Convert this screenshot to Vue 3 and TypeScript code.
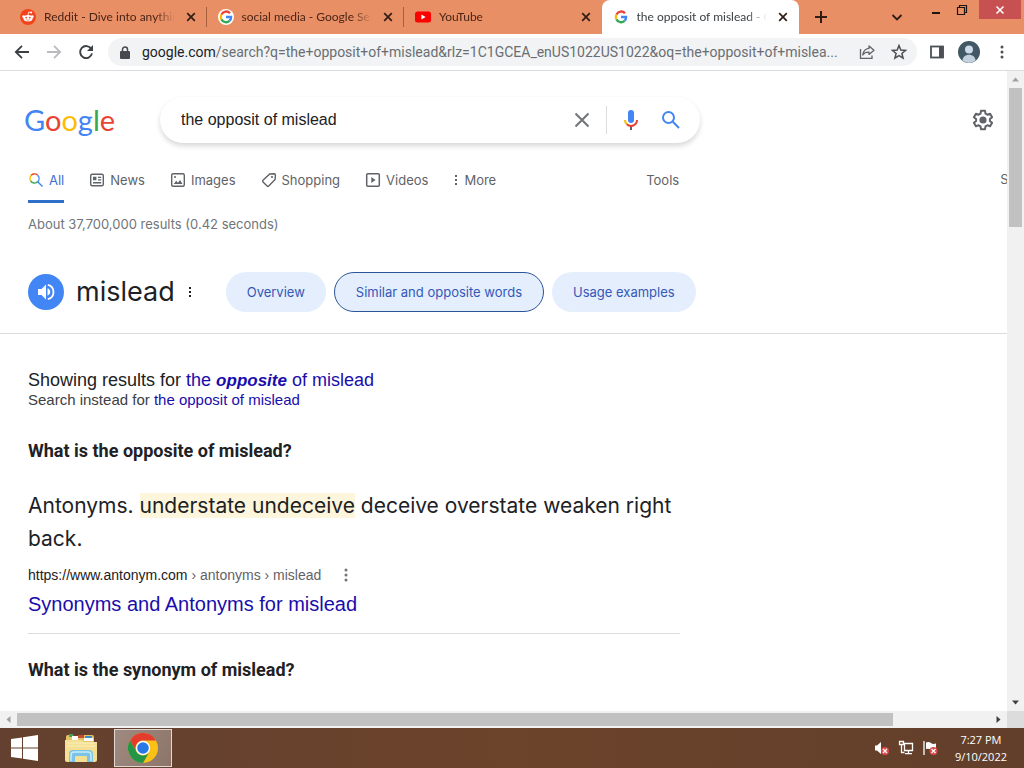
<script setup lang="ts">
import { ref } from 'vue'

interface BrowserTab {
  id: string
  title: string
  active?: boolean
}

interface SearchMode {
  id: string
  label: string
}

const tabs: BrowserTab[] = [
  { id: 'reddit', title: 'Reddit - Dive into anything' },
  { id: 'google-round', title: 'social media - Google Search' },
  { id: 'youtube', title: 'YouTube' },
  { id: 'google', title: 'the opposit of mislead - Google Search', active: true },
]

const modes: SearchMode[] = [
  { id: 'all', label: 'All' },
  { id: 'news', label: 'News' },
  { id: 'images', label: 'Images' },
  { id: 'shopping', label: 'Shopping' },
  { id: 'videos', label: 'Videos' },
  { id: 'more', label: 'More' },
]

const chips = ['Overview', 'Similar and opposite words', 'Usage examples']
const selectedChip = ref('Similar and opposite words')
const query = ref('the opposit of mislead')
const urlHost = 'google.com'
const urlPath =
  '/search?q=the+opposit+of+mislead&rlz=1C1GCEA_enUS1022US1022&oq=the+opposit+of+mislea...'
</script>

<template>
  <div class="window">
    <header class="tabstrip">
      <div class="tabs">
        <div v-for="tab in tabs" :key="tab.id" class="tab" :class="{ active: tab.active }">
          <svg v-if="tab.id === 'reddit'" class="fav" viewBox="0 0 16 16">
            <circle cx="8" cy="8" r="8" fill="#f4431c" />
            <circle cx="3.6" cy="7.6" r="1.3" fill="#fff" />
            <circle cx="12.4" cy="7.6" r="1.3" fill="#fff" />
            <ellipse cx="8" cy="9.2" rx="4.6" ry="3.3" fill="#fff" />
            <path d="M8 6l.8-3 2.2.6" fill="none" stroke="#fff" stroke-width=".8" />
            <circle cx="11.2" cy="3.6" r="1" fill="#fff" />
            <circle cx="6.2" cy="8.6" r=".9" fill="#f4431c" />
            <circle cx="9.8" cy="8.6" r=".9" fill="#f4431c" />
            <path d="M6.2 10.7q1.8 1.1 3.6 0" fill="none" stroke="#f4431c" stroke-width=".6" />
          </svg>
          <svg v-else-if="tab.id === 'youtube'" class="fav" viewBox="0 0 16 16">
            <rect x="0" y="2.5" width="16" height="11" rx="2.5" fill="#f00" />
            <path d="M6.4 5.6v4.8L10.6 8z" fill="#fff" />
          </svg>
          <svg v-else class="fav" viewBox="0 0 16 16">
            <circle v-if="tab.id === 'google-round'" cx="8" cy="8" r="8" fill="#fff" />
            <g fill="none" stroke-width="2.3">
              <path d="M12 4.2A5.2 5.2 0 0 0 3.4 5.6" stroke="#ea4335" />
              <path d="M3.4 5.6a5.2 5.2 0 0 0 0 4.8" stroke="#fbbc05" />
              <path d="M3.4 10.4a5.2 5.2 0 0 0 8.2 1.4" stroke="#34a853" />
              <path d="M11.6 11.8A5 5 0 0 0 13.1 8H8" stroke="#4285f4" />
            </g>
          </svg>
          <span class="tab-title">{{ tab.title }}</span>
          <button class="tab-close" :aria-label="'Close ' + tab.title">
            <svg width="10" height="10" viewBox="0 0 10 10">
              <path d="M1.2 1.2l7.6 7.6M8.8 1.2L1.2 8.8" stroke="currentColor" stroke-width="1.7" />
            </svg>
          </button>
        </div>
      </div>
      <button class="new-tab" aria-label="New tab">
        <svg width="14" height="14" viewBox="0 0 14 14">
          <path d="M7 1v12M1 7h12" stroke="#2f1d16" stroke-width="2" />
        </svg>
      </button>
      <span class="grow"></span>
      <button class="tab-search" aria-label="Search tabs">
        <svg width="12" height="12" viewBox="0 0 12 12">
          <path d="M1.5 4L6 8.5 10.5 4" fill="none" stroke="#2f1d16" stroke-width="1.8" />
        </svg>
      </button>
      <div class="win-buttons">
        <button aria-label="Minimize">
          <svg width="10" height="18" viewBox="0 0 10 18">
            <path d="M1 12h8" stroke="#1e1410" stroke-width="2" />
          </svg>
        </button>
        <button aria-label="Restore">
          <svg width="12" height="18" viewBox="0 0 12 18">
            <path d="M3.5 6.500V4.500h7v7H8.500M1.500 6.500h7v7h-7z" fill="none" stroke="#1e1410" stroke-width="1.2" />
          </svg>
        </button>
        <button class="win-close" aria-label="Close window">
          <svg width="10" height="10" viewBox="0 0 10 10">
            <path d="M1.500 1.500l7 7M8.500 1.500l-7 7" stroke="#fff" stroke-width="1.6" />
          </svg>
        </button>
      </div>
    </header>

    <div class="toolbar">
      <button class="tool" aria-label="Back">
        <svg width="16" height="16" viewBox="0 0 16 16">
          <path d="M15 8H2M8 1.800L1.800 8 8 14.200" fill="none" stroke="#3c4043" stroke-width="1.8" />
        </svg>
      </button>
      <button class="tool" aria-label="Forward">
        <svg width="16" height="16" viewBox="0 0 16 16">
          <path d="M1 8h13M8 1.800L14.200 8 8 14.200" fill="none" stroke="#b9bbbe" stroke-width="1.8" />
        </svg>
      </button>
      <button class="tool" aria-label="Reload">
        <svg width="16" height="16" viewBox="0 0 16 16">
          <path d="M13.300 5A6 6 0 1 0 14 9.400" fill="none" stroke="#3c4043" stroke-width="1.900" />
          <path d="M15 1v6H9z" fill="#3c4043" />
        </svg>
      </button>
      <div class="omnibox">
        <svg class="lock" width="10" height="13" viewBox="0 0 10 13">
          <path d="M2.500 6V3.500a2.500 2.500 0 0 1 5 0V6" fill="none" stroke="#46494d" stroke-width="1.500" />
          <rect x="0" y="5" width="10" height="8" rx="1" fill="#46494d" />
        </svg>
        <span class="url"><span class="host">{{ urlHost }}</span>{{ urlPath }}</span>
        <button class="tool" aria-label="Share">
          <svg width="16" height="16" viewBox="0 0 16 16" fill="none" stroke="#5f6368" stroke-width="1.300">
            <path d="M1.500 5v9.300h11.500V11.500" />
            <path d="M10 2l5 4.200-5 4.200V8.200C7 8.100 5 9 3.800 11 4.200 7.200 6.500 4.800 10 4.400z" stroke-linejoin="round" />
          </svg>
        </button>
        <button class="tool" aria-label="Bookmark this page">
          <svg width="16" height="16" viewBox="0 0 16 16">
            <path d="M8 1.500l1.800 4.500 4.800.4-3.700 3.100 1.200 4.700L8 11.700l-4.100 2.500 1.200-4.700L1.400 6.400 6.200 6z" fill="none" stroke="#4c5054" stroke-width="1.500" />
          </svg>
        </button>
      </div>
      <button class="tool" aria-label="Side panel">
        <svg width="14" height="14" viewBox="0 0 14 14">
          <rect x="1" y="1.500" width="12" height="11" fill="none" stroke="#4c5054" stroke-width="1.800" />
          <rect x="9" y="1" width="4.500" height="12" fill="#4c5054" />
        </svg>
      </button>
      <button class="tool" aria-label="Profile">
        <svg width="22" height="22" viewBox="0 0 22 22">
          <circle cx="11" cy="11" r="11" fill="#435865" />
          <circle cx="11" cy="8.500" r="4" fill="#cfdbe8" />
          <path d="M4.500 19.800c0-8 13-8 13 0A11 11 0 0 1 4.500 19.800z" fill="#c3d0de" />
        </svg>
      </button>
      <button class="tool" aria-label="Chrome menu">
        <svg width="4" height="14" viewBox="0 0 4 14" fill="#4c5054">
          <circle cx="2" cy="2" r="1.500" /><circle cx="2" cy="7" r="1.500" /><circle cx="2" cy="12" r="1.500" />
        </svg>
      </button>
    </div>

    <div class="viewport">
      <main class="page">
        <div class="search-header">
          <a class="logo" href="#" aria-label="Google home"><span class="b">G</span><span class="r">o</span><span class="y">o</span><span class="b">g</span><span class="g">l</span><span class="r">e</span></a>
          <form class="searchbox" role="search" @submit.prevent>
            <input v-model="query" type="text" aria-label="Search" />
            <button type="button" class="icon-btn" aria-label="Clear">
              <svg width="24" height="24" viewBox="0 0 24 24">
                <path d="M5.500 5.500l13 13M18.500 5.500l-13 13" stroke="#70757a" stroke-width="2" />
              </svg>
            </button>
            <span class="divider"></span>
            <button type="button" class="icon-btn" aria-label="Search by voice">
              <svg width="24" height="24" viewBox="0 0 24 24">
                <rect x="9" y="2" width="6" height="13" rx="3" fill="#4285f4" />
                <path d="M11 18h2v4h-2z" fill="#5f6368" />
                <path d="M6 12a6 6 0 0 0 1.800 4.200" fill="none" stroke="#fbbc04" stroke-width="2" />
                <path d="M7.800 16.200A6 6 0 0 0 18 12" fill="none" stroke="#ea4335" stroke-width="2" />
              </svg>
            </button>
            <button type="submit" class="icon-btn" aria-label="Search Google">
              <svg width="24" height="24" viewBox="0 0 24 24" fill="none" stroke="#4285f4" stroke-width="2">
                <circle cx="9.500" cy="9.500" r="5.500" /><path d="M13.800 13.800l6.200 6.200" />
              </svg>
            </button>
          </form>
          <button class="icon-btn settings" aria-label="Settings">
            <svg width="24" height="24" viewBox="0 0 24 24">
              <path d="M10 2.800h4l.5 2.800 1.900 1.100 2.700-1 2 3.500-2.200 1.800v2l2.200 1.800-2 3.500-2.700-1-1.900 1.100-.5 2.800h-4l-.5-2.800-1.900-1.100-2.700 1-2-3.500L5.100 13v-2L2.900 9.200l2-3.500 2.700 1 1.900-1.100z" fill="none" stroke="#5f6368" stroke-width="2" stroke-linejoin="round" />
              <circle cx="12" cy="12" r="3.600" fill="#5f6368" />
            </svg>
          </button>
        </div>

        <nav class="modes">
          <a v-for="mode in modes" :key="mode.id" href="#" class="mode" :class="[mode.id, { current: mode.id === 'all' }]">
            <svg v-if="mode.id === 'all'" width="16" height="16" viewBox="0 0 16 16" fill="none" stroke-width="1.400">
              <path d="M2.800 9.200A4.600 4.600 0 0 1 6.500 1.900" stroke="#fbbc04" />
              <path d="M3.300 3.300a4.600 4.600 0 0 1 6.400 0" stroke="#ea4335" />
              <path d="M9.700 3.300a4.600 4.600 0 0 1 0 6.500l4.800 4.800" stroke="#4285f4" />
              <path d="M2.600 8.900a4.600 4.600 0 0 0 7.100.9" stroke="#34a853" />
            </svg>
            <svg v-else-if="mode.id === 'news'" width="16" height="16" viewBox="0 0 16 16">
              <rect x="1.700" y="2.200" width="12.600" height="11.600" rx="1.500" fill="none" stroke="#5f6368" stroke-width="1.400" />
              <path d="M4 4.800h3.400v3.400H4zM9 4.800h3.200v1.200H9zM9 7.200h3.200v1.200H9zM4 10h8.200v1.400H4z" fill="#5f6368" />
            </svg>
            <svg v-else-if="mode.id === 'images'" width="16" height="16" viewBox="0 0 16 16">
              <rect x="1.700" y="1.700" width="12.600" height="12.600" rx="1.500" fill="none" stroke="#5f6368" stroke-width="1.400" />
              <path d="M3.800 12l2.400-3.200 1.700 2 2.200-2.800 2.400 4z" fill="#5f6368" />
              <circle cx="5" cy="5" r="1" fill="#5f6368" />
            </svg>
            <svg v-else-if="mode.id === 'shopping'" width="16" height="16" viewBox="0 0 16 16">
              <path d="M8.700 2l4.500-.2q1.200 0 1.200 1.200l-.3 4.500-6.400 6.600q-.8.800-1.600 0L2 9.900q-.8-.8 0-1.600z" fill="none" stroke="#5f6368" stroke-width="1.400" />
              <circle cx="11" cy="5" r="1.100" fill="#5f6368" />
            </svg>
            <svg v-else-if="mode.id === 'videos'" width="16" height="16" viewBox="0 0 16 16">
              <rect x="1.700" y="1.700" width="12.600" height="12.600" rx="1" fill="none" stroke="#5f6368" stroke-width="1.500" />
              <path d="M6.300 5v6l4.200-3z" fill="#5f6368" />
            </svg>
            <svg v-else width="6" height="16" viewBox="0 0 6 16" fill="#5f6368">
              <rect x="2" y="3" width="2" height="2" /><rect x="2" y="7" width="2" height="2" /><rect x="2" y="11" width="2" height="2" />
            </svg>
            <span>{{ mode.label }}</span>
          </a>
          <button class="tools">Tools</button>
          <span class="safe">SafeSearch</span>
        </nav>

        <p class="stats">About 37,700,000 results (0.42 seconds)</p>

        <section class="word">
          <button class="speak" aria-label="Pronounce">
            <svg width="36" height="36" viewBox="0 0 36 36">
              <circle cx="18" cy="18" r="18" fill="#4285f4" />
              <path d="M10 15h3.500l4.500-4.500v15L13.500 21H10z" fill="#fff" />
              <path d="M19.500 14.200v7.600a4 4 0 0 0 0-7.600z" fill="#fff" />
              <path d="M19.800 10.800a7.400 7.400 0 0 1 0 14.400" fill="none" stroke="#fff" stroke-width="1.800" />
            </svg>
          </button>
          <h1>mislead</h1>
          <button class="dots" aria-label="About this result">
            <svg width="4" height="14" viewBox="0 0 4 14" fill="#202124">
              <rect x="1" y="2" width="2" height="2" /><rect x="1" y="6" width="2" height="2" /><rect x="1" y="10" width="2" height="2" />
            </svg>
          </button>
          <div class="chips">
            <button v-for="chip in chips" :key="chip" class="chip" :class="{ selected: chip === selectedChip }" @click="selectedChip = chip">
              {{ chip }}
            </button>
          </div>
        </section>

        <section class="results">
          <p class="showing">Showing results for <a href="#">the <b><i>opposite</i></b> of mislead</a></p>
          <p class="instead">Search instead for <a href="#">the opposit of mislead</a></p>

          <article class="answer">
            <h2>What is the opposite of mislead?</h2>
            <p class="snippet">Antonyms. <mark>understate undeceive</mark> deceive overstate weaken right back.</p>
            <div class="source">
              <cite>https://www.antonym.com<span> › antonyms › mislead</span></cite>
              <button class="dots" aria-label="About this source">
                <svg width="4" height="14" viewBox="0 0 4 14" fill="#70757a">
                  <circle cx="2" cy="2" r="1.500" /><circle cx="2" cy="7" r="1.500" /><circle cx="2" cy="12" r="1.500" />
                </svg>
              </button>
            </div>
            <h3><a href="#">Synonyms and Antonyms for mislead</a></h3>
          </article>
          <article class="answer">
            <h2>What is the synonym of mislead?</h2>
          </article>
        </section>
      </main>

      <div class="bar vertical" aria-hidden="true">
        <svg width="17" height="17" viewBox="0 0 17 17"><path d="M5 10.500h7l-3.500-4z" fill="#a0a0a0" /></svg>
        <div class="track"><div class="thumb"></div></div>
        <svg width="17" height="17" viewBox="0 0 17 17"><path d="M5 6.500h7l-3.500 4z" fill="#404040" /></svg>
      </div>
      <div class="bar horizontal" aria-hidden="true">
        <svg width="17" height="17" viewBox="0 0 17 17"><path d="M10.500 5v7l-4-3.500z" fill="#a0a0a0" /></svg>
        <div class="track"><div class="thumb"></div></div>
        <svg width="17" height="17" viewBox="0 0 17 17"><path d="M6.500 5v7l4-3.500z" fill="#404040" /></svg>
      </div>
      <div class="corner"></div>
    </div>

    <footer class="taskbar">
      <button class="start" aria-label="Start">
        <svg width="27" height="26" viewBox="0 0 27 26" fill="#fff">
          <path d="M0 4l11-1.600v10.100H0zM12 2.300L27 0v12.500H12zM0 13.500h11v10.100L0 22zM12 13.500h15V26l-15-2.300z" />
        </svg>
      </button>
      <button class="pinned" aria-label="File Explorer">
        <svg width="34" height="32" viewBox="0 0 34 32">
          <path d="M2 5q0-2 2-2h5l1 2h4l1-2h13q2 0 2 2v22H2z" fill="#e3c467" />
          <path d="M5 2h4v3H5z" fill="#4aa05a" /><path d="M14 3h6v3h-6z" fill="#c84a36" /><path d="M21 4h7v3h-7z" fill="#3b8fc8" />
          <path d="M8 4h6v4H8zM20 6h9v3h-9z" fill="#fff" />
          <path d="M1 8h17l2 2h13v18q0 2-2 2H3q-2 0-2-2z" fill="#f4df93" />
          <path d="M3 11h28M3 14h28" stroke="#fbf0bd" />
          <path d="M5 30V22q0-4 4-4h16q4 0 4 4v8h-6v-5q0-1-1-1H12q-1 0-1 1v5z" fill="#7cc3e8" />
          <path d="M7 29v-6q0-3 3-3h14q3 0 3 3v6" fill="none" stroke="#c8ecfb" stroke-width="1.500" />
        </svg>
      </button>
      <button class="pinned running" aria-label="Google Chrome">
        <svg width="30" height="30" viewBox="0 0 30 30">
          <circle cx="15" cy="15" r="15" fill="#fbc116" />
          <path d="M2 7.500A15 15 0 0 1 28 7.500H15A7.500 7.500 0 0 0 8.500 18.750z" fill="#e33b2e" />
          <path d="M2 7.500L8.500 18.750A7.500 7.500 0 0 0 21.500 18.750L15 30A15 15 0 0 1 2 7.500z" fill="#249547" />
          <circle cx="15" cy="15" r="7.200" fill="#fff" />
          <circle cx="15" cy="15" r="5.800" fill="#2878e8" />
        </svg>
      </button>
      <span class="grow"></span>
      <div class="tray">
        <svg width="16" height="16" viewBox="0 0 16 16">
          <path d="M1 5.500h2L7 2v12l-4-3.500H1z" fill="#fff" />
          <circle cx="11" cy="11" r="4" fill="#d94a4a" />
          <path d="M9 9l4 4M13 9l-4 4" stroke="#fff" stroke-width="1.200" />
        </svg>
        <svg width="16" height="16" viewBox="0 0 16 16" fill="none" stroke="#fff" stroke-width="1.300">
          <path d="M6.500 3.500h8v7h-8zM10.500 10.500v3M7 13.700h7M1.500 1.500h4v3h-4zM3.500 4.500v8h3" />
        </svg>
        <svg width="16" height="16" viewBox="0 0 16 16">
          <path d="M2 1v14" stroke="#fff" stroke-width="1.300" />
          <path d="M4 2.500q3-1 5 .5t5 .5v6q-3 1-5 0t-5-.5z" fill="#fff" />
          <circle cx="11.500" cy="11" r="4" fill="#d94a4a" />
          <path d="M9.500 9l4 4M13.500 9l-4 4" stroke="#fff" stroke-width="1.200" />
        </svg>
      </div>
      <div class="clock"><span>7:27 PM</span><span>9/10/2022</span></div>
    </footer>
  </div>
</template>

<style>
body {
  margin: 0;
}
</style>

<style scoped>
.window {
  display: flex;
  flex-direction: column;
  height: 100vh;
  overflow: hidden;
  background: #fff;
  color: #202124;
  font-family: "Liberation Sans", Arial, sans-serif;
}
.window * {
  box-sizing: border-box;
}
button {
  display: flex;
  align-items: center;
  justify-content: center;
  flex: none;
  padding: 0;
  border: 0;
  background: none;
  font: inherit;
  color: inherit;
}
svg {
  display: block;
  flex: none;
}
a {
  color: #1a0dab;
  text-decoration: none;
}
p,
h1,
h2,
h3 {
  margin: 0;
  font-weight: 400;
}
.grow {
  flex: 1;
}

/* Tab strip */
.tabstrip {
  display: flex;
  flex: none;
  height: 34px;
  padding-left: 9px;
  background: #e98f65;
}
.tabs {
  display: flex;
  flex: 0 1 790px;
  min-width: 0;
}
.tab {
  position: relative;
  display: flex;
  align-items: center;
  flex: 1 1 0;
  min-width: 0;
  gap: 8px;
  padding: 0 8px 0 11px;
  color: #4a2416;
  font: 12px/16px Lato, sans-serif;
}
.tab::after {
  content: "";
  position: absolute;
  right: 0;
  width: 1px;
  height: 20px;
  background: #a8603f;
}
.tab:nth-child(3)::after,
.tab.active::after {
  display: none;
}
.tab.active {
  border-radius: 8px 8px 0 0;
  background: #fff;
  color: #3c4043;
}
.fav {
  width: 16px;
  height: 16px;
}
.tab-title {
  flex: 1;
  min-width: 0;
  overflow: hidden;
  white-space: nowrap;
  mask-image: linear-gradient(to right, #000 calc(100% - 20px), transparent);
}
.tab-close {
  width: 16px;
  height: 16px;
  color: #2f1d16;
}
.new-tab {
  width: 28px;
  margin-left: 8px;
}
.tab-search {
  width: 28px;
  margin-right: 12px;
}
.win-buttons {
  display: flex;
  align-items: flex-start;
  padding-right: 3px;
}
.win-buttons button {
  width: 26px;
  height: 19px;
}
.win-buttons .win-close {
  width: 42px;
  margin-left: 4px;
  background: #c75050;
}

/* Toolbar */
.toolbar {
  display: flex;
  align-items: center;
  flex: none;
  gap: 8px;
  height: 37px;
  padding: 0 14px 0 10px;
  border-bottom: 1px solid #dadce0;
}
.tool {
  min-width: 24px;
  height: 24px;
}
.toolbar > .tool:last-child {
  min-width: 16px;
  margin-left: 5px;
}
.omnibox {
  display: flex;
  align-items: center;
  flex: 1;
  min-width: 0;
  gap: 8px;
  height: 28px;
  margin-left: 2px;
  padding: 0 6px 0 12px;
  border-radius: 14px;
  background: #f1f3f4;
}
.lock {
  margin-right: 4px;
}
.url {
  flex: 1;
  min-width: 0;
  overflow: hidden;
  color: #6a6e73;
  font: 14px/20px Roboto, sans-serif;
  white-space: nowrap;
}
.host {
  color: #202124;
}

/* Viewport and scroll bars */
.viewport {
  display: grid;
  grid-template: minmax(0, 1fr) 17px / minmax(0, 1fr) 17px;
  flex: 1;
  min-height: 0;
}
.page {
  min-width: 0;
  overflow: hidden;
}
.bar {
  display: flex;
  background: #f1f1f1;
}
.vertical {
  flex-direction: column;
}
.horizontal {
  grid-area: 2 / 1;
}
.track {
  display: flex;
  flex: 1;
}
.thumb {
  background: #c1c1c1;
}
.vertical .track {
  flex-direction: column;
  padding: 0 2px;
}
.vertical .thumb {
  height: 23%;
}
.horizontal .track {
  padding: 2px 0;
}
.horizontal .thumb {
  width: 90%;
}
.corner {
  background: #dcdcdc;
}

/* Search header */
.search-header {
  display: flex;
  align-items: center;
  padding: 26px 12px 0 24px;
}
.logo {
  display: block;
  width: 136px;
  font: 29px/46px Lato, sans-serif;
}
.b { color: #4285f4; }
.r { color: #ea4335; }
.y { color: #fbbc05; }
.g { color: #34a853; }
.searchbox {
  display: flex;
  align-items: center;
  flex: 0 1 540px;
  min-width: 0;
  height: 46px;
  padding: 0 9px 0 21px;
  border-radius: 23px;
  background: #fff;
  box-shadow: 0 3px 5px rgba(64, 60, 67, 0.2);
}
.searchbox input {
  flex: 1;
  min-width: 0;
  padding: 0;
  border: 0;
  outline: 0;
  background: none;
  color: #202124;
  font: 16px/24px "Liberation Sans", Arial, sans-serif;
}
.icon-btn {
  width: 40px;
  height: 40px;
}
.divider {
  width: 1px;
  height: 28px;
  margin: 0 4px;
  background: #dadce0;
}
.settings {
  width: 24px;
  margin-left: auto;
}

/* Search modes */
.modes {
  display: flex;
  gap: 25px;
  height: 36px;
  margin-top: 24px;
  padding-left: 28px;
  color: #5f6368;
  font: 13px/24px Inter, sans-serif;
  white-space: nowrap;
}
.mode {
  display: flex;
  align-items: center;
  flex: none;
  gap: 5px;
  color: inherit;
}
.mode,
.tools,
.safe {
  height: 36px;
  padding-bottom: 10px;
}
.current {
  border-bottom: 3px solid #2f6fc9;
  padding-bottom: 7px;
  color: #3b6fd8;
}
.tools {
  margin-left: 125px;
}
.safe {
  flex: none;
  margin-left: auto;
  margin-right: -64px;
}
.stats {
  padding: 9px 28px 0;
  color: #70757a;
  font: 13px/24px Inter, sans-serif;
}

/* Word header */
.word {
  display: flex;
  align-items: center;
  margin-top: 36px;
  padding: 0 28px 21px;
  border-bottom: 1px solid #dadce0;
}
h1 {
  margin-left: 12px;
  font: 27px/40px Inter, sans-serif;
}
.dots {
  width: 16px;
  height: 24px;
}
.word .dots {
  margin-left: 7px;
}
.chips {
  display: flex;
  gap: 8px;
  margin-left: 28px;
}
.chip {
  height: 40px;
  padding: 0 21px;
  border-radius: 20px;
  background: #e4eefd;
  color: #3558b8;
  font: 13px/20px Inter, sans-serif;
  white-space: nowrap;
}
.chip.selected {
  border: 1px solid #2a5599;
}

/* Results */
.results {
  max-width: 708px;
  padding: 35px 28px 0;
}
.showing {
  font-size: 18px;
  line-height: 22px;
}
.showing b {
  font-size: 17px;
  line-height: 1;
}
.instead {
  font-size: 15px;
  line-height: 18px;
  color: #3c4043;
}
.answer {
  padding: 30px 0 16px;
}
.answer + .answer {
  padding-top: 24px;
  border-top: 1px solid #dadce0;
}
h2 {
  font: 700 18px/24px Roboto, sans-serif;
}
.snippet {
  margin-top: 26px;
  font: 21px/33px Inter, sans-serif;
}
mark {
  background: #fdf6dc;
  color: inherit;
}
.source {
  display: flex;
  align-items: center;
  gap: 17px;
  margin-top: 8px;
}
cite {
  font-size: 14px;
  font-style: normal;
  line-height: 24px;
}
cite span {
  color: #5f6368;
}
h3 {
  margin-top: 4px;
  font-size: 20px;
  line-height: 26px;
}

/* Taskbar */
.taskbar {
  display: flex;
  align-items: center;
  flex: none;
  height: 40px;
  background: linear-gradient(to right, #63402f, #6c432b 50%, #623f2b);
  color: #fff;
}
.start {
  width: 48px;
  height: 40px;
}
.pinned {
  width: 58px;
  height: 38px;
  margin-left: 4px;
}
.running {
  border: 1px solid #e0d8d4;
  background: linear-gradient(120deg, #a08a80, #8c7468);
}
.tray {
  display: flex;
  gap: 8px;
  margin-right: 17px;
}
.clock {
  display: flex;
  flex-direction: column;
  align-items: center;
  margin-right: 17px;
  font: 11px/17px "Open Sans", sans-serif;
}
</style>
